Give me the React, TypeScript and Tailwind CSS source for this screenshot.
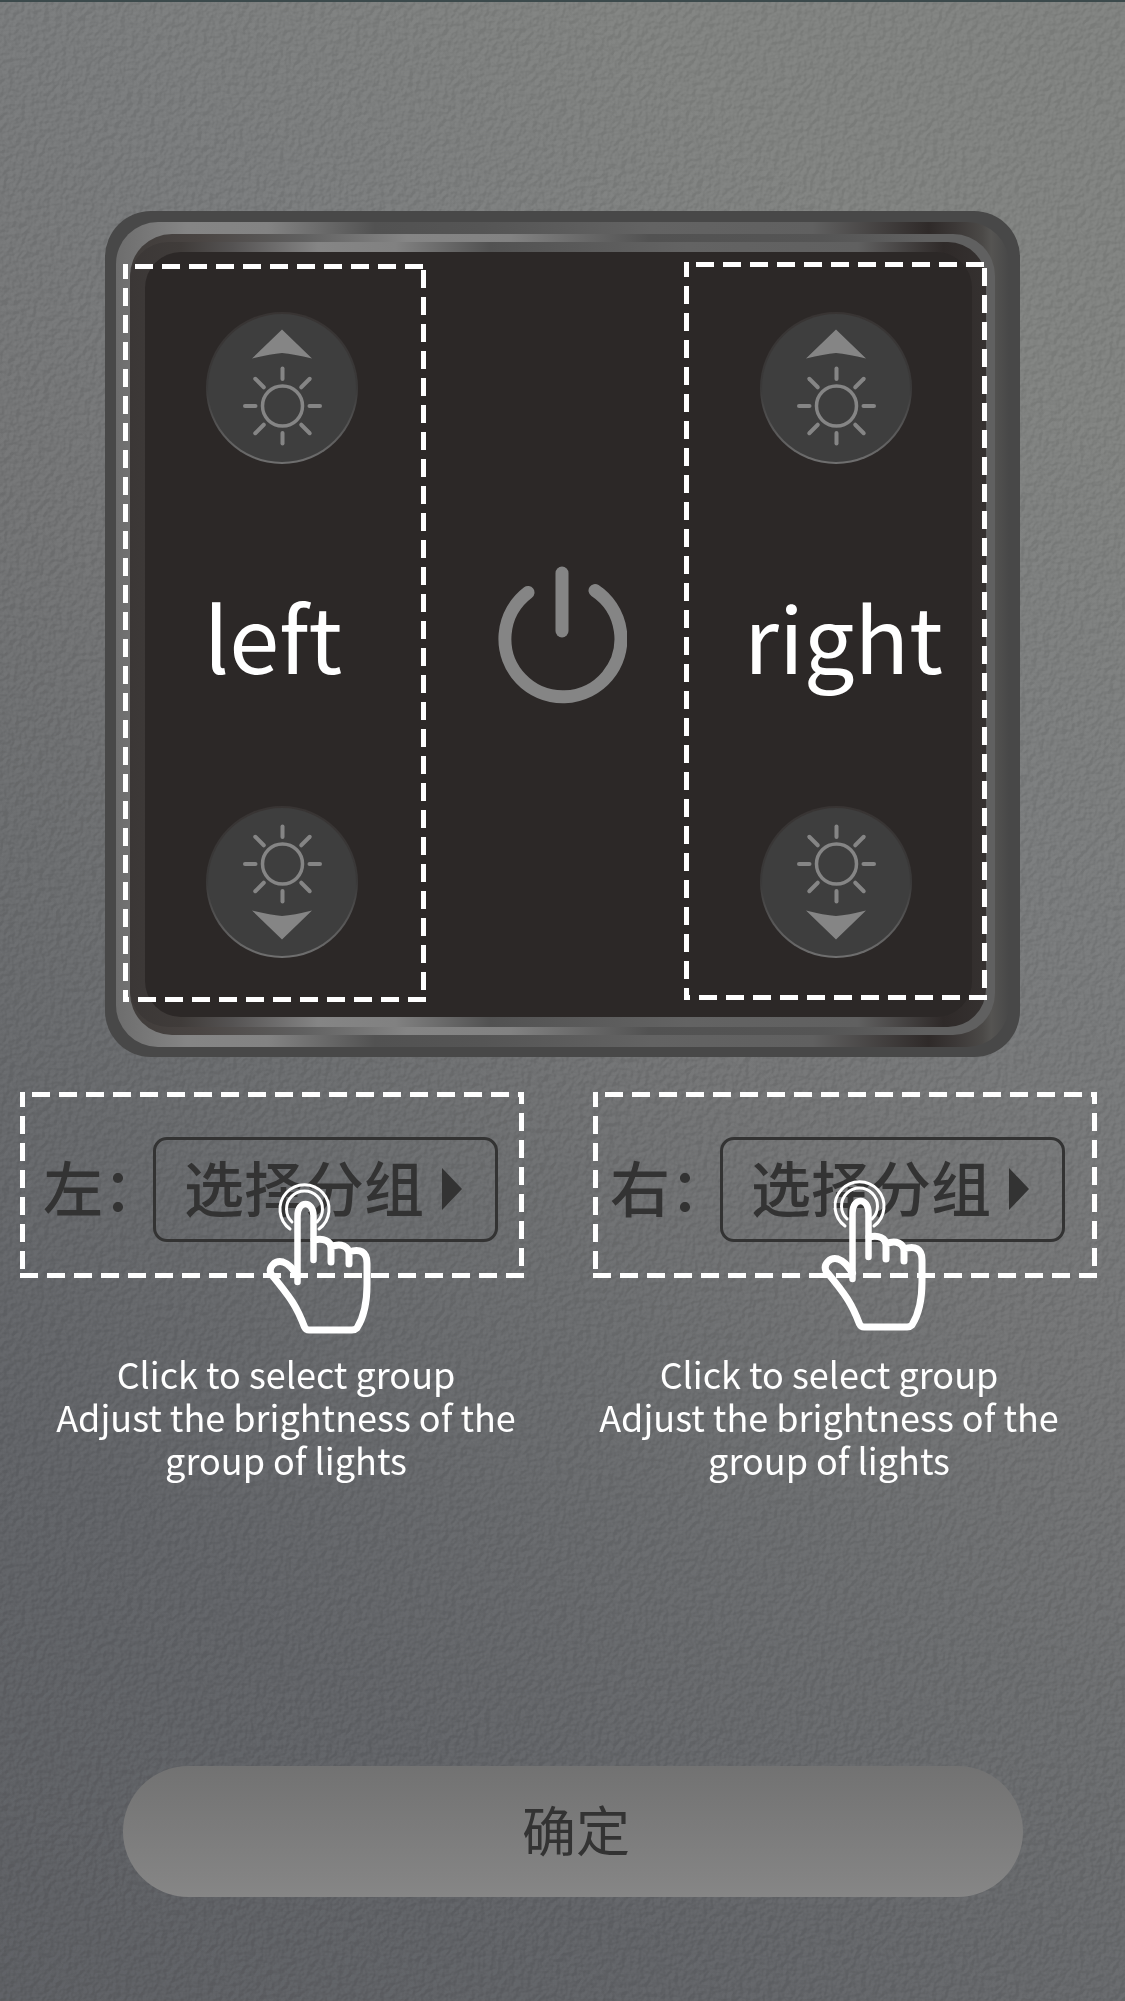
import React from "react";

const rimOuter =
  "bg-[linear-gradient(90deg,#6d6d6d_0%,#858585_8%,#838383_17%,#525252_29%,#555555_41%,#636363_60%,#606060_78%,#2f2a29_91%,#3c3837_94%,#4b4947_97%,#555452_98%,#484848_100%)]";
const rimMiddle =
  "bg-[linear-gradient(90deg,#403c3a_0%,#4a4543_8%,#606060_20%,#858585_32%,#828282_44%,#525252_60%,#555555_80%,#606060_92%,#606060_100%)]";
const rimInner =
  "bg-[linear-gradient(90deg,#3b3736_0%,#403c3a_6%,#555353_12%,#858585_22%,#818181_31%,#525252_42%,#636363_65%,#606060_85%,#2f2a29_95%,#353130_100%)]";

function DashedFrame({ w, h, small = false }: { w: number; h: number; small?: boolean }) {
  return (
    <svg
      aria-hidden="true"
      className="pointer-events-none absolute inset-0 h-full w-full"
      viewBox={`0 0 ${w} ${h}`}
      preserveAspectRatio="none"
      fill="none"
      stroke="#fff"
      strokeWidth="5"
      strokeDasharray="18 9"
    >
      <path d={`M12 2.5H${w}`} />
      <path d={`M2.5 0V${h}`} strokeDashoffset="3" />
      <path d={`M${w - 2.5} ${small ? 0 : 6}V${h}`} strokeDashoffset={small ? 6 : 0} />
      <path d={`M0 ${h - 2.5}H${w}`} strokeDashoffset={small ? 0 : 12} />
    </svg>
  );
}

function Sun({ y }: { y: number }) {
  return (
    <g transform={`translate(76.5 ${y})`} stroke="#858585" strokeLinecap="round" fill="none">
      <circle r="20" strokeWidth="3.5" />
      {[0, 45, 90, 135, 180, 225, 270, 315].map((a) => (
        <path key={a} d={a % 90 ? "M0 -26.5V-38.5" : "M0 -27V-37.5"} strokeWidth="4" transform={`rotate(${a})`} />
      ))}
    </g>
  );
}

function DimButton({ up, label }: { up: boolean; label: string }) {
  return (
    <button
      type="button"
      aria-label={label}
      className="h-[152px] w-[152px] rounded-full bg-[linear-gradient(180deg,#383433_0%,#3a3939_50%,#707070_100%)] p-[2px]"
    >
      <span className="block rounded-full bg-[#3e3e3e]">
        <svg viewBox="2 2 148 148" className="block h-[148px] w-full">
          {up ? (
            <path d="M76 17.500L106 46.500Q88 42 76 41Q64 42 46 46.500Z" fill="#858585" />
          ) : (
            <path d="M76 133.500L106 104.500Q88 109 76 110Q64 109 46 104.500Z" fill="#858585" />
          )}
          <Sun y={up ? 94 : 58} />
        </svg>
      </span>
    </button>
  );
}

function Side({ name }: { name: "left" | "right" }) {
  const left = name === "left";
  return (
    <section className={left ? "relative mt-[2px] h-[738px] w-[303px]" : "relative h-[738px] w-[303px]"}>
      <DashedFrame w={303} h={738} />
      <div
        className={
          left
            ? "flex h-full flex-col items-center justify-between pt-[48px] pb-[44px] pl-[15px]"
            : "flex h-full flex-col items-center justify-between pt-[50px] pb-[42px]"
        }
      >
        <DimButton up label={`${name} brighter`} />
        <h2 className={left ? "pr-[18px] text-[90px] leading-none text-white" : "pl-[16px] text-[90px] leading-none text-white"}>
          {name}
        </h2>
        <DimButton up={false} label={`${name} dimmer`} />
      </div>
    </section>
  );
}

function Hand() {
  return (
    <svg
      viewBox="0 0 110 156"
      className="h-[156px] w-[110px]"
      fill="none"
      stroke="#fff"
      strokeLinecap="round"
      strokeLinejoin="round"
      aria-hidden="true"
    >
      <path d="M24 48A24.500 24.500 0 1 1 53 48" strokeWidth="3" />
      <path d="M26 41A18 18 0 1 1 51 41" strokeWidth="3" />
      <path d="M31.500 101V35C31.500 19 47.500 19 47.500 35V79" strokeWidth="6.5" />
      <path
        d="M48 59C58 57 65 60 65 67V81M65 66C75 61 83 66 83 73V83M83 71C94 67 101 71 101 82V104C101 124 96 139 91 147Q89 149 86 149H43Q40 149 38.500 146C31 126 25 117 5 93C2 86 9 79 17 81C23 83 26 87 31.500 95"
        strokeWidth="7"
      />
    </svg>
  );
}

export default function App() {
  return (
    <main className="relative isolate flex min-h-screen flex-col border-t-2 border-[#3c4a4c] bg-[linear-gradient(40deg,#5d5f63_0%,#616367_20%,#6b6d6f_40%,#737475_52%,#797b7c_68%,#808280_85%,#808280_100%)] font-['Noto_Sans_CJK_SC','Noto_Sans',sans-serif] text-[#333]">
      <svg aria-hidden="true" className="absolute inset-0 -z-10 h-full w-full opacity-6 mix-blend-overlay">
        <filter id="leather" x="0" y="0" width="100%" height="100%" colorInterpolationFilters="sRGB">
          <feTurbulence type="fractalNoise" baseFrequency="0.17" numOctaves="2" seed="4" />
          <feDiffuseLighting surfaceScale="5" diffuseConstant="0.8" lightingColor="#fff">
            <feDistantLight azimuth="225" elevation="40" />
          </feDiffuseLighting>
        </filter>
        <rect width="100%" height="100%" filter="url(#leather)" />
      </svg>

      <div className="mx-[105px] mt-[209px] rounded-[46px] bg-[#484848] px-[11px] pt-[11px] pb-[10px]">
        <div className={`rounded-[42px] px-[14px] py-[12px] ${rimOuter}`}>
          <div className={`rounded-[42px] py-[8px] pr-[9px] ${rimMiddle}`}>
            <div className={`rounded-[38px] py-[10px] pr-[14px] pl-[15px] ${rimInner}`}>
              <div className="flex h-[765px] items-start justify-between rounded-[36px] bg-[#2c2827] pt-[10px]">
                <div className="-ml-[22px]">
                  <Side name="left" />
                </div>
                <button type="button" aria-label="Power" className="mt-[302px] ml-[13px]">
                  <svg
                    viewBox="0 0 130 140"
                    className="h-[140px] w-[130px]"
                    fill="none"
                    stroke="#858585"
                    strokeWidth="13"
                    strokeLinecap="round"
                  >
                    <path d="M31 28.500A58 58 0 1 0 98 26.500" />
                    <path d="M65 9V67" />
                  </svg>
                </button>
                <div className="-mr-[15px]">
                  <Side name="right" />
                </div>
              </div>
            </div>
          </div>
        </div>
      </div>

      <div className="flex justify-between pt-[35px] pr-[28px] pl-[20px]">
        {[
          { id: "left", label: "左：" },
          { id: "right", label: "右：" },
        ].map(({ id, label }) => {
          const left = id === "left";
          return (
            <section key={id} className="w-[504px]">
              <div className="relative">
                <DashedFrame w={504} h={186} small />
                <div
                  className={
                    left
                      ? "flex h-[186px] items-center justify-end pt-[8px] pr-[26px]"
                      : "flex h-[186px] items-center justify-end pt-[8px] pr-[32px]"
                  }
                >
                  <label htmlFor={id} className="w-[110px] pb-[6px] text-[60px] leading-[60px] font-medium whitespace-nowrap">
                    {label}
                  </label>
                  <button
                    id={id}
                    type="button"
                    className="flex h-[105px] w-[345px] items-center rounded-[14px] border-3 border-[#333] pl-[28px] text-[60px] leading-[60px] font-medium whitespace-nowrap"
                  >
                    <span className="pb-[6px]">选择分组</span>
                    <svg viewBox="0 0 20 42" className="ml-[18px] h-[42px] w-[20px]" fill="#333" aria-hidden="true">
                      <path d="M0 0L20 21L0 42Z" />
                    </svg>
                  </button>
                </div>
                <div
                  className={
                    left
                      ? "pointer-events-none absolute top-[89px] left-[246px]"
                      : "pointer-events-none absolute top-[86px] left-[228px]"
                  }
                >
                  <Hand />
                </div>
              </div>
              <p
                className={
                  left
                    ? "mt-[74px] ml-[28px] text-center text-[36px] leading-[43px] whitespace-nowrap text-white"
                    : "mt-[74px] mr-[32px] text-center text-[36px] leading-[43px] whitespace-nowrap text-white"
                }
              >
                Click to select group
                <br />
                Adjust the brightness of the
                <br />
                group of lights
              </p>
            </section>
          );
        })}
      </div>

      <button
        type="button"
        className="mt-auto mr-[102px] mb-[104px] ml-[123px] h-[131px] rounded-full bg-linear-to-b from-[#727272] to-[#868686] pb-[5px] pl-[6px] text-[54px] leading-none"
      >
        确定
      </button>
    </main>
  );
}
